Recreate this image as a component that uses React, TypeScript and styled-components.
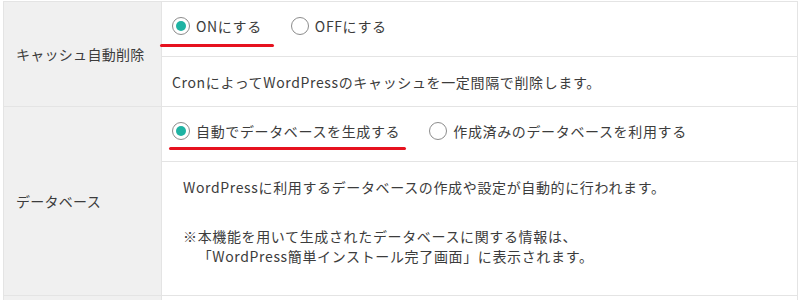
import styled, { createGlobalStyle } from 'styled-components'

const GlobalStyle = createGlobalStyle`
  html, body {
    margin: 0;
    padding: 0;
    background: #fff;
  }
  body {
    font-family: "Noto Sans CJK JP", "Noto Sans", sans-serif;
    color: #3c3c3c;
    letter-spacing: 0.04em;
    text-spacing-trim: space-all;
  }
`

const Page = styled.div`
  padding: 1px 2px 0 3px;
`

const Table = styled.div`
  border-left: 1px solid #e4e4e4;
  border-right: 1px solid #e4e4e4;
`

const Row = styled.div`
  display: flex;
  border-top: 1px solid #e4e4e4;
`

const Label = styled.div<{ $filler?: boolean }>`
  width: 158px;
  flex-shrink: 0;
  display: flex;
  align-items: center;
  padding-left: 12px;
  box-sizing: border-box;
  background: #f0f0f0;
  border-right: 1px solid #e4e4e4;
  font-size: 14px;
  letter-spacing: 0.02em;
  ${p => (p.$filler ? 'height: 40px;' : '')}
`

const Body = styled.div`
  flex: 1;
  display: flex;
  flex-direction: column;
`

const OptionRow = styled.div`
  position: relative;
  height: 55px;
  box-sizing: border-box;
  padding: 15px 10px 0;
  display: flex;
  align-items: flex-start;
  gap: 29px;
  border-bottom: 1px solid #e4e4e4;
`

const Option = styled.label`
  display: flex;
  align-items: center;
  gap: 6px;
  font-size: 14px;
  line-height: 18px;
`

const RadioDot = styled.span<{ checked?: boolean }>`
  width: 18px;
  height: 18px;
  box-sizing: border-box;
  border-radius: 50%;
  border: 1.5px solid #8c8c8c;
  display: flex;
  align-items: center;
  justify-content: center;
  background: #fff;

  &::after {
    content: '';
    width: 10px;
    height: 10px;
    border-radius: 50%;
    background: ${p => (p.checked ? '#1fb3a3' : 'transparent')};
  }
`

const Underline = styled.span<{ $left: number; $width: number; $top: number }>`
  position: absolute;
  left: ${p => p.$left}px;
  top: ${p => p.$top}px;
  width: ${p => p.$width}px;
  height: 3px;
  border-radius: 2px;
  background: #e6121f;
`

const Note = styled.div<{ $tall?: boolean }>`
  font-size: 14px;
  line-height: 20px;
  box-sizing: border-box;
  ${p =>
    p.$tall
      ? `
    height: 133px;
    padding: 15px 0 0 21px;
  `
      : `
    height: 49px;
    padding: 0 10px;
    display: flex;
    align-items: center;
  `}
`

const Para = styled.p`
  margin: 0 0 29px;
  white-space: pre;
`

const Radio = ({ checked, children }: { checked?: boolean; children: React.ReactNode }) => (
  <Option>
    <RadioDot checked={checked} />
    {children}
  </Option>
)

export default function App() {
  return (
    <Page>
      <GlobalStyle />
      <Table>
        <Row>
          <Label>キャッシュ自動削除</Label>
          <Body>
            <OptionRow>
              <Radio checked>ONにする</Radio>
              <Radio>OFFにする</Radio>
              <Underline $left={-2} $top={42} $width={114} />
            </OptionRow>
            <Note>CronによってWordPressのキャッシュを一定間隔で削除します。</Note>
          </Body>
        </Row>
        <Row>
          <Label>データベース</Label>
          <Body>
            <OptionRow>
              <Radio checked>自動でデータベースを生成する</Radio>
              <Radio>作成済みのデータベースを利用する</Radio>
              <Underline $left={7} $top={40} $width={237} />
            </OptionRow>
            <Note $tall>
              <Para>WordPressに利用するデータベースの作成や設定が自動的に行われます。</Para>
              <Para>
                {'※本機能を用いて生成されたデータベースに関する情報は、\n\u3000「WordPress簡単インストール完了画面」に表示されます。'}
              </Para>
            </Note>
          </Body>
        </Row>
        <Row>
          <Label $filler />
          <Body />
        </Row>
      </Table>
    </Page>
  )
}
